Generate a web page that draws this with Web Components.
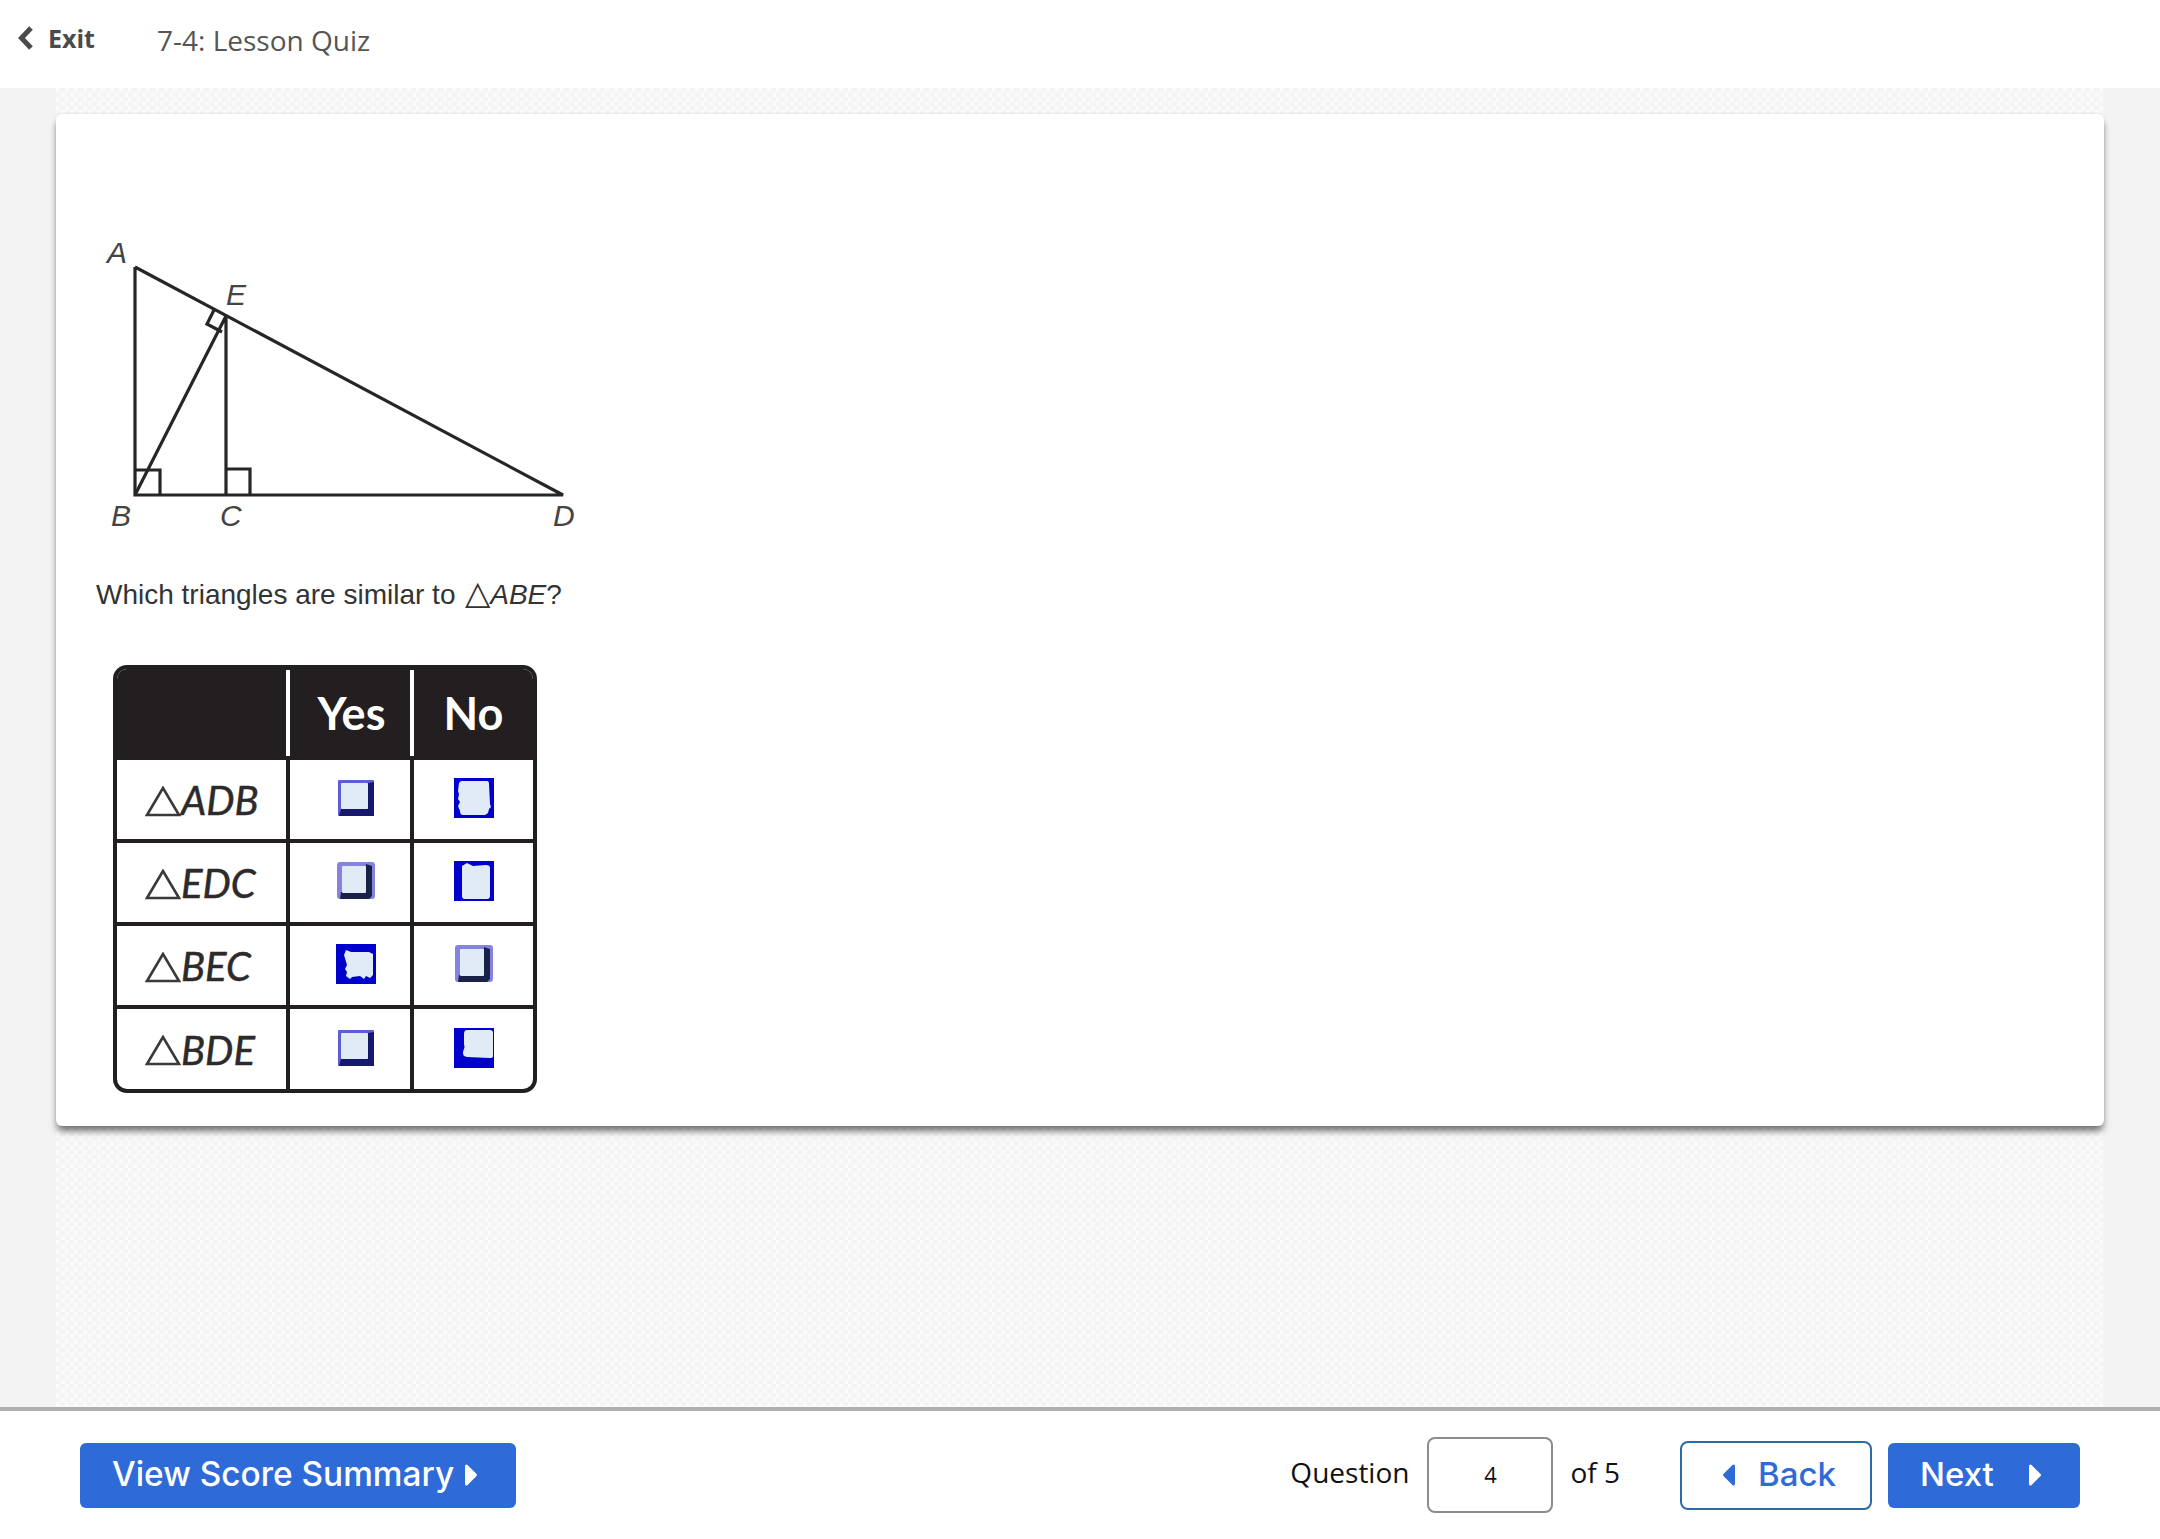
<!DOCTYPE html>
<html lang="en">
<head>
<meta charset="utf-8">
<title>7-4: Lesson Quiz</title>
<style>
  html, body { margin: 0; height: 100%; }
  body {
    display: flex;
    flex-direction: column;
    min-height: 1539px;
    background: #f3f3f3;
    font-family: "Open Sans", sans-serif;
    overflow: hidden;
  }
  .tri { font-size: 33px; line-height: 1; margin-left: 2px; }
</style>
</head>
<body>
  <quiz-header title-text="7-4: Lesson Quiz"></quiz-header>
  <quiz-stage>
    <quiz-card>
      <triangle-figure></triangle-figure>
      <quiz-prompt>Which triangles are similar to <span class="tri">△</span><i>ABE</i>?</quiz-prompt>
      <answer-table>
        <answer-row label="ADB" yes="a" no="on1"></answer-row>
        <answer-row label="EDC" yes="b" no="on2"></answer-row>
        <answer-row label="BEC" yes="on3" no="b"></answer-row>
        <answer-row label="BDE" yes="a" no="on4" class="last"></answer-row>
      </answer-table>
    </quiz-card>
  </quiz-stage>
  <quiz-footer current="4" total="5"></quiz-footer>

<script>
class QuizHeader extends HTMLElement {
  constructor() {
    super();
    const shadowRoot = this.attachShadow({ mode: "open" });
    shadowRoot.innerHTML = `<style>
:host {
  display: flex;
  align-items: center;
  flex: none;
  height: 88px;
  background: #fff;
  color: #4a4a4a;
  font-family: "Open Sans", sans-serif;
}
a { display: flex; align-items: center; gap: 14px; margin-left: 17px; width: 140px; font-weight: 700; font-size: 25px; margin-top: -13px; }
svg { display: block; width: 17px; height: 26px; }
span { font-size: 28px; color: #555; margin-top: -9px; }
</style>
<a><svg viewBox="0 0 17 26"><path d="M14 3 4.5 13l9.5 10" fill="none" stroke="currentColor" stroke-width="5"/></svg>Exit</a>
<span></span>`;
    shadowRoot.querySelector("span").textContent = this.getAttribute("title-text");
  }
}

class QuizStage extends HTMLElement {
  constructor() {
    super();
    const shadowRoot = this.attachShadow({ mode: "open" });
    shadowRoot.innerHTML = `<style>
:host {
  display: block;
  flex: 1;
  margin: 0 56px;
  padding-top: 26px;
  background-color: #f8f8f8;
  background-image: repeating-conic-gradient(#f4f4f4 0 25%, #fafafa 0 50%);
  background-size: 9px 9px;
}
</style><slot></slot>`;
  }
}

class QuizCard extends HTMLElement {
  constructor() {
    super();
    const shadowRoot = this.attachShadow({ mode: "open" });
    shadowRoot.innerHTML = `<style>
:host {
  display: block;
  box-sizing: border-box;
  height: 1012px;
  padding: 110px 40px 0;
  background: #fff;
  border-radius: 6px;
  box-shadow: 0 6px 7px -1px rgba(0, 0, 0, .55), 0 -1px 2px rgba(0, 0, 0, .06);
}
</style><slot></slot>`;
  }
}

class TriangleFigure extends HTMLElement {
  constructor() {
    super();
    const shadowRoot = this.attachShadow({ mode: "open" });
    // viewBox is in page pixels so the points read straight off the reference
    shadowRoot.innerHTML = `<style>
:host { display: block; height: 320px; }
svg { display: block; width: 500px; height: 320px; }
text { font: italic 30px "Liberation Sans", sans-serif; fill: #444; }
</style>
<svg viewBox="96 224 500 320">
  <g fill="none" stroke="#262626" stroke-width="3.2">
    <path d="M135 267V495H563L135 267"/>
    <path d="M135 495 226 316V495"/>
    <path d="M135 470h25v25M226 469h24v26"/>
    <path d="M214 310l-7 14 15 8"/>
  </g>
  <text x="107" y="263">A</text>
  <text x="226" y="305">E</text>
  <text x="111" y="526">B</text>
  <text x="220" y="526">C</text>
  <text x="553" y="526">D</text>
</svg>`;
  }
}

class QuizPrompt extends HTMLElement {
  constructor() {
    super();
    const shadowRoot = this.attachShadow({ mode: "open" });
    shadowRoot.innerHTML = `<style>
:host {
  display: block;
  font: 28px/40px "Liberation Sans", sans-serif;
  color: #333;
  margin-top: 31px;
}
</style><slot></slot>`;
  }
}

class AnswerTable extends HTMLElement {
  constructor() {
    super();
    const shadowRoot = this.attachShadow({ mode: "open" });
    shadowRoot.innerHTML = `<style>
:host {
  display: block;
  box-sizing: border-box;
  width: 424px;
  margin: 50px 0 0 17px;
  border: 4px solid #231f20;
  border-radius: 14px;
  overflow: hidden;
  background: #fff;
}
.head {
  display: grid;
  grid-template-columns: 169px 124px 1fr;
  height: 87px;
  background: #231f20;
  color: #fff;
  font: 700 45px Lato, "Open Sans", sans-serif;
}
.head div { display: flex; align-items: center; justify-content: center; }
.head div + div { border-left: 4px solid #fff; margin-top: 1px; }
.head .yes { padding-left: 3px; }
</style>
<div class="head"><div></div><div class="yes">Yes</div><div>No</div></div>
<slot></slot>`;
  }
}

class AnswerRow extends HTMLElement {
  constructor() {
    super();
    const shadowRoot = this.attachShadow({ mode: "open" });
    shadowRoot.innerHTML = `<style>
:host {
  display: grid;
  grid-template-columns: 169px 124px 1fr;
  height: 83px;
  border-top: 4px solid #231f20;
  box-sizing: border-box;
  font: italic 40px Lato, "Open Sans", sans-serif;
  color: #2c2a2b;
  -webkit-text-stroke: .5px #2c2a2b;
}
:host(.last) { height: 84px; }
div { display: flex; align-items: center; justify-content: center; padding-bottom: 3px; }
div + div { border-left: 4px solid #231f20; }
.name { justify-content: flex-start; padding-left: 28px; padding-bottom: 0; }
.name svg { width: 36px; height: 31px; margin-right: 0; margin-top: 3px; flex: none; }
.name span { margin-top: 1px; }
.yes { padding-left: 12px; }
</style>
<div class="name"><svg viewBox="0 0 36 31" role="img"><path d="M18 2 2 29h32z" fill="none" stroke="#3a3a3a" stroke-width="2.6"/></svg><span></span></div>
<div class="yes"><answer-check kind="${this.getAttribute("yes")}"></answer-check></div>
<div><answer-check kind="${this.getAttribute("no")}"></answer-check></div>`;
    shadowRoot.querySelector("span").textContent = this.getAttribute("label");
  }
}

// the picked marks are hand-scribbled in the reference, so each has its own blob
const CHECK_ART = {
  a: `<rect x="2" y="2" width="36" height="36" rx="1" fill="#5d5dd6"/><path d="M3 38h35V4l-6 1v26H5z" fill="#16186e"/><rect x="5" y="5" width="27" height="26" rx="1" fill="#e1ebf6"/>`,
  b: `<rect x="1" y="1" width="38" height="37" rx="3" fill="#8484e0"/><path d="M4 38h29l3-3V5l-6-2v28H5z" fill="#1a2148"/><rect x="6" y="5" width="24" height="27" rx="1" fill="#e1ebf6"/>`,
  on1: `<rect width="40" height="40" fill="#0000cd"/><path d="M7 3H33q2 0 2 3L36 26l1 3-2 2-1 4-3 2H9q-3 0-3-4L4 28l2-4-2-3 1-5-1-3 1-8z" fill="#e1ebf6"/>`,
  on2: `<rect width="40" height="40" fill="#0000cd"/><path d="M8 5l5-3 6 3 13-1q4 0 4 3V35q0 3-3 3H11q-3 0-3-3z" fill="#e1ebf6"/>`,
  on3: `<rect width="40" height="40" fill="#0000cd"/><path d="M10 6l5 2H33l4 2V31l-3 3-4-2-2 3-4-3-8 1-2 2-4-3 1-4-2-3 2-4-3-10z" fill="#e1ebf6"/>`,
  on4: `<rect width="40" height="40" fill="#0000cd"/><path d="M13 2H36q3 0 3 3V28q0 2-3 2L13 29l-3-1q-2-3 0-7 1-2 0-5V6q0-4 3-4z" fill="#e1ebf6"/>`
};

class AnswerCheck extends HTMLElement {
  constructor() {
    super();
    const shadowRoot = this.attachShadow({ mode: "open" });
    shadowRoot.innerHTML = `<style>
:host { display: block; width: 40px; height: 40px; }
svg { display: block; width: 40px; height: 40px; }
</style><svg viewBox="0 0 40 40">${CHECK_ART[this.getAttribute("kind")]}</svg>`;
  }
}

class QuizButton extends HTMLElement {
  constructor() {
    super();
    const shadowRoot = this.attachShadow({ mode: "open" });
    shadowRoot.innerHTML = `<style>
:host {
  display: flex;
  align-items: center;
  box-sizing: border-box;
  height: 65px;
  padding-bottom: 3px;
  background: #2f6bd8;
  color: #fff;
  border-radius: 6px;
  font: 500 33px Inter, "Open Sans", sans-serif;
}
:host([outline]) {
  height: 69px;
  background: #fff;
  color: #2f6bd8;
  border: 2px solid #2c6aa8;
  border-radius: 8px;
}
</style><slot></slot>`;
  }
}

class QuizFooter extends HTMLElement {
  constructor() {
    super();
    const shadowRoot = this.attachShadow({ mode: "open" });
    const arrow = (d) => `<svg viewBox="0 0 14 24" style="display:block;width:14px;height:24px;flex:none;margin-top:3px"><path d="${d}" fill="currentColor" stroke="currentColor" stroke-width="3" stroke-linejoin="round"/></svg>`;
    const right = arrow("M2.5 3 11.5 12 2.5 21z");
    const left = arrow("M11.5 3 2.5 12 11.5 21z");
    shadowRoot.innerHTML = `<style>
:host {
  display: flex;
  align-items: center;
  flex: none;
  box-sizing: border-box;
  height: 132px;
  padding: 0 80px 0;
  background: #fff;
  border-top: 4px solid #aeaeae;
  color: #111;
  font: 28px "Open Sans", sans-serif;
}
.score { width: 436px; font-size: 33.4px; padding-left: 32px; gap: 10px; }
.spacer { flex: 1; }
.label { margin-bottom: 7px; }
.box {
  display: flex;
  align-items: center;
  justify-content: center;
  box-sizing: border-box;
  width: 126px;
  height: 76px;
  margin: 0 17px 0 18px;
  padding-bottom: 3px;
  border: 2px solid #8c8c8c;
  border-radius: 8px;
  font-size: 22px;
}
.back { width: 192px; margin-left: 60px; padding-left: 40px; gap: 22px; }
.next { width: 192px; margin-left: 16px; padding-left: 32px; gap: 34px; }
</style>
<quiz-button class="score">View Score Summary${right}</quiz-button>
<div class="spacer"></div>
<span class="label">Question</span>
<div class="box"></div>
<span class="label">of ${this.getAttribute("total")}</span>
<quiz-button class="back" outline>${left}Back</quiz-button>
<quiz-button class="next">Next${right}</quiz-button>`;
    shadowRoot.querySelector(".box").textContent = this.getAttribute("current");
  }
}

customElements.define("quiz-header", QuizHeader);
customElements.define("quiz-stage", QuizStage);
customElements.define("quiz-card", QuizCard);
customElements.define("triangle-figure", TriangleFigure);
customElements.define("quiz-prompt", QuizPrompt);
customElements.define("answer-table", AnswerTable);
customElements.define("answer-check", AnswerCheck);
customElements.define("answer-row", AnswerRow);
customElements.define("quiz-button", QuizButton);
customElements.define("quiz-footer", QuizFooter);
</script>
</body>
</html>
